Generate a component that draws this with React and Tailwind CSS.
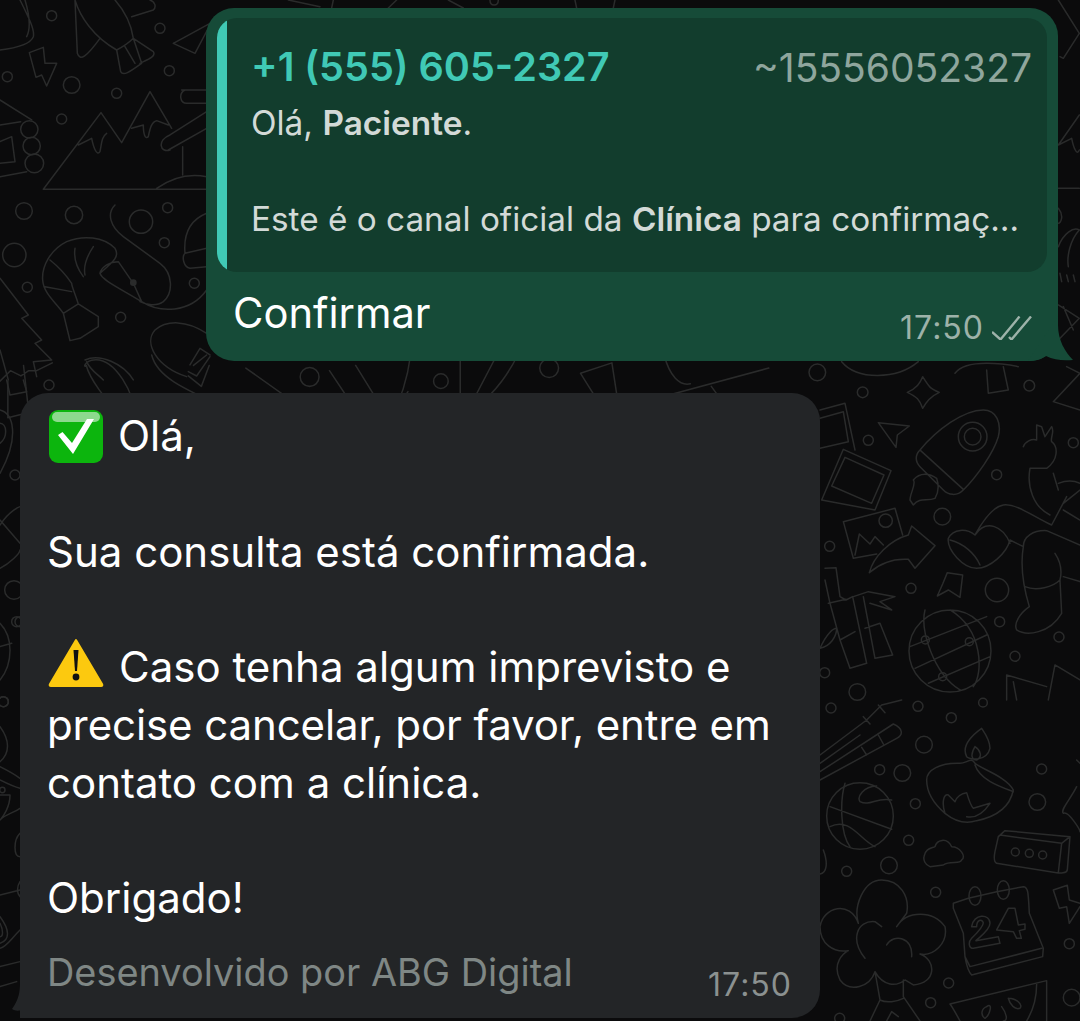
import React from "react";

// doodle wallpaper, coordinates copied off 3x crops so each group is scaled back down
function Doodles() {
  const topLeft = [[155,47,15],[480,85,15],[22,230,15],[215,255,25],[350,280,15],[185,357,15],[508,212,15],[72,633,25],[222,645,26],[423,665,35],[503,623,15],[493,728,15],[43,765,35],[82,862,15],[362,952,15],[583,850,15],[88,388,26],[95,438,26],[103,490,28]];
  const midRight = [[145,121,15],[530,224,15],[367,350,25],[29,439,15],[273,565,15],[531,570,35],[539,665,15],[717,711,15],[585,769,15],[14,818,15],[112,876,25],[760,128,15],[197,362,20]];
  const lowRight = [[33,24,15],[294,19,15],[394,53,15],[489,8,13],[312,134,25],[179,209,15],[247,219,25],[286,311,15],[665,207,15],[652,306,25],[266,421,15],[207,496,25],[80,514,15],[347,577,15],[748,731,15],[386,849,15],[332,908,15],[755,893,25],[59,955,15]];
  const leftEdge = [[60,65,15],[10,305,15],[7,570,8]];
  const leftTop = [[45,285,15],[42,630,28],[50,725,15],[10,965,15],[147,15,15]];
  return (
    <svg className="absolute inset-0 w-[1080px] h-[1021px]" viewBox="0 0 1080 1021" fill="none" stroke="#2a2b2b" strokeWidth="1.5" strokeLinecap="round" strokeLinejoin="round">
      <g transform="scale(0.3333)" strokeWidth="4.5">
        {topLeft.map(([x, y, r], i) => <circle key={i} cx={x} cy={y} r={r} />)}
        <path d="M130 568 L303 338 L365 428 L450 275 L515 385 M130 568 H620 M235 435 L275 415 C280 440 290 470 300 455 C305 430 305 410 320 400 M395 385 L430 375 C430 400 435 420 445 410 C450 385 455 365 470 362 L505 375 M545 270 H620 M555 270 C535 280 540 310 560 310 L620 310 M510 405 L620 335 M505 450 L620 385 M510 405 C470 420 480 460 510 450 M548 440 V525 M470 565 C520 530 570 520 620 530 M0 300 L95 360 M0 375 L62 365 M0 425 L35 410 L45 485 L0 490 M0 530 L80 515 M88 158 L130 142 L135 190 L170 190 L140 258 L125 225 L108 232 Z M60 0 C85 50 105 90 100 110 C90 135 40 145 0 150 M75 0 C90 50 90 90 80 110 M225 0 L232 160 C240 185 260 170 300 115 M345 0 C380 40 395 80 400 115 C385 130 370 140 350 150 C280 110 240 50 225 0 M400 115 L460 155 C470 170 440 180 420 190 M350 150 L362 215 C370 230 390 215 425 190 L400 115 M375 140 L405 190 M395 50 L460 30 C470 20 465 5 450 0 M520 130 L585 160 L630 75 M520 130 L630 70" />
        <path d="M300 820 C340 785 360 770 345 745 C310 710 250 705 200 725 C150 750 125 800 128 840 C130 880 170 910 190 940 L210 1022 L240 1015 L295 980 L295 950 L235 912 C225 880 215 860 215 850 M300 820 C305 840 360 865 425 905 L400 850 L355 785 C330 785 305 800 300 820 M135 860 L215 875 M190 940 L235 912 M150 780 C175 800 195 820 215 850 M225 745 C220 780 235 810 250 830 M280 740 C260 770 250 800 255 825 M345 615 C320 640 330 680 370 710 L480 790 C520 820 520 880 490 905 C470 920 440 915 420 905 M425 905 C480 940 570 940 620 870 M620 640 C570 660 550 700 555 760 C545 770 550 800 570 805 L620 800 M555 760 L620 745 M620 1000 C560 960 500 960 465 990 C430 1030 470 1100 560 1130 M570 1095 L600 1045 L630 1065 M565 1115 L590 1128 L630 1070 M0 835 L85 945 L65 955 L125 1020 L105 1030 L155 1080 L100 1085 L110 1130 M0 1050 L25 1140 M255 1080 C300 1060 370 1090 400 1140 M260 1085 C270 1110 290 1120 310 1140" />
        <circle cx="400" cy="848" r="10" fill="#2a2b2b" strokeWidth="0" />
      </g>
      <g transform="translate(200 0) scale(0.3333)" strokeWidth="4.5">
        <path d="M265 0 L360 20 M400 0 L395 24 M565 24 L590 0 M745 0 L790 24 M870 0 C870 20 895 20 895 0 M1125 0 L1130 24 M1245 0 L1240 24" />
      </g>
      <g transform="translate(1040 0) scale(0.3333)" strokeWidth="4.5">
        <path d="M55 0 L118 100 L70 175 L60 170 M55 435 L118 345 M55 435 L95 415 C100 440 110 470 118 450 M55 565 H118 M55 625 C75 650 60 670 55 670 M55 740 C70 700 100 680 118 690 C90 720 80 770 85 800 M60 820 L65 845 M80 825 L85 845 M100 825 L105 845 M55 915 L118 955 L55 1020 M70 920 L100 990" />
      </g>
      <g transform="translate(0 355) scale(0.523)" strokeWidth="2.9">
        <circle cx="592" cy="42" r="18" />
        <circle cx="843" cy="50" r="14" />
        <circle cx="93" cy="90" r="14" />
        <circle cx="1050" cy="25" r="18" />
        <circle cx="525" cy="110" r="16" />
        <circle cx="1023" cy="105" r="12" />
        <path d="M175 10 C220 0 260 80 260 120 M165 20 C170 40 200 90 240 120 M175 10 C160 15 160 25 165 20 M0 50 L20 30 L40 40 L55 30 L70 30 L100 15 M15 50 L15 120 L55 110 L45 20 M290 0 C300 40 340 60 450 110 M470 25 L590 110 M630 30 L690 120 M680 20 L745 125 L780 70 M785 0 C780 40 770 80 745 125 M880 10 L880 115 M990 0 C960 60 920 100 880 115 M950 0 L890 115 M1110 35 L1160 115 M1110 35 L1170 15 L1180 80 C1185 100 1200 100 1210 95 L1470 25 M1270 0 C1280 40 1300 60 1320 55 M1360 60 L1400 115 M1440 110 L1495 100 V125 M370 20 L395 0 M360 40 L385 60 L400 20" />
      </g>
      <g transform="translate(0 380) scale(0.3333)" strokeWidth="4.5">
        {leftTop.map(([x, y, r], i) => <circle key={i} cx={x} cy={y} r={r} />)}
        <path d="M0 90 C40 100 60 170 0 280 M0 130 C20 130 25 170 0 190 M0 435 C30 390 60 380 60 380 M0 420 L60 490 M0 565 C30 550 60 520 60 510 M0 730 C40 770 40 850 0 900 M0 800 L35 790 M20 0 L30 45 L80 35 L70 0" />
      </g>
      <g transform="translate(0 600) scale(0.3333)" strokeWidth="4.5">
        {leftEdge.map(([x, y, r], i) => <circle key={i} cx={x} cy={y} r={r} />)}
        <path d="M0 380 C30 420 30 460 0 485 M0 500 C20 510 40 520 60 535 M0 540 C20 550 40 560 60 565 M0 585 H30 C30 620 10 650 0 660 M0 660 C20 640 40 640 60 625 M60 700 C40 720 40 770 60 770 M0 885 L60 870 M60 845 C50 860 50 880 60 890 M0 950 C30 990 30 1020 0 1030 M0 970 C10 990 10 1010 0 1010 M60 990 C30 1020 20 1040 0 1045 M0 1100 L60 1085 M0 1160 L50 1145" />
      </g>
      <g transform="translate(820 400) scale(0.3333)" strokeWidth="4.5">
        {midRight.map(([x, y, r], i) => <circle key={i} cx={x} cy={y} r={r} />)}
        <circle cx="458" cy="110" r="43" />
        <circle cx="458" cy="110" r="25" />
        <path d="M0 30 L75 10 L105 150 M0 55 L70 35 L85 125 L0 145 M70 148 L213 212 L165 330 L5 300 Z M75 172 L192 225 L155 310 L35 258 Z M70 365 L225 325 L248 405 M70 365 L100 475 L170 462 M105 465 L118 402 L150 432 L165 410 L190 435 M175 68 L268 78 L232 105 L228 142 Z M300 150 C350 90 430 30 490 30 C530 30 545 70 535 110 C520 160 470 230 430 270 C410 290 385 285 370 270 L300 200 C285 185 285 165 300 150 Z M302 152 L430 268 M350 235 C330 220 300 215 280 240 C290 250 270 280 270 300 L280 315 C300 290 320 305 345 295 C360 270 355 250 350 235 M148 518 C160 470 210 420 265 405 L275 378 L345 437 L285 505 L265 478 C220 475 180 490 148 518 Z M610 140 C615 125 635 115 650 120 L650 75 L665 80 L675 110 L695 80 C705 95 690 115 695 125 C715 140 715 180 680 205 L630 205 C620 260 640 320 690 345 M700 220 L715 270 M715 250 C740 240 760 240 780 250 M695 375 L740 290 M730 310 L780 270 M730 330 L780 360 M695 375 C640 350 590 310 550 315 C520 320 490 360 465 405 C440 385 400 385 385 415 C380 450 430 505 470 505 C510 505 560 460 570 420 L610 440 M390 420 C430 430 465 460 480 495 M465 405 C500 355 550 380 570 430 M610 440 C600 500 610 560 628 620 C600 640 580 670 590 690 C620 710 690 700 725 640 L720 540 M615 560 C650 575 700 560 720 540 M705 460 C725 490 725 520 720 540 M610 440 C610 410 640 390 680 392 L780 435 M730 530 L780 545 M382 518 L428 525 L420 592 L385 570 L352 588 L368 552 Z M15 505 L48 503 L60 590 L78 600 L98 590 L140 790 L90 805 L60 720 L30 610 L15 540 M25 610 L78 598 M60 720 L105 695 M100 590 L145 575 L225 590 L180 605 L215 630 L150 610 M130 590 L165 775 L218 765 L180 670 L135 685 M0 745 C20 700 40 685 50 685 C50 710 30 740 0 745 M390 630 A123 123 0 1 0 390 876 A123 123 0 1 0 390 630 Z M270 740 L500 650 M285 805 L500 705 M325 850 L510 770 M315 630 C300 690 340 820 420 870 M390 630 C490 690 490 820 460 860 M560 825 L560 900 M560 825 L680 860 M705 795 L780 840 M705 795 L685 900 M580 845 L590 900" />
        <circle cx="316" cy="720" r="12" />
        <circle cx="448" cy="725" r="12" />
        <circle cx="368" cy="830" r="12" />
      </g>
      <g transform="translate(820 700) scale(0.3333)" strokeWidth="4.5">
        {lowRight.map(([x, y, r], i) => <circle key={i} cx={x} cy={y} r={r} />)}
        <circle cx="120" cy="348" r="100" />
        <circle cx="586" cy="456" r="12" />
        <circle cx="628" cy="460" r="12" />
        <circle cx="668" cy="465" r="12" />
        <ellipse cx="465" cy="588" rx="18" ry="28" />
        <ellipse cx="550" cy="570" rx="18" ry="28" />
        <path d="M0 165 L140 60 L185 15 L245 0 M0 190 L120 105 M0 215 L220 72 C250 85 250 105 230 115 L0 240 M130 50 L150 72 M175 15 L195 38 M125 142 L140 165 M175 105 L190 132 M30 320 L215 388 M75 250 C60 300 60 400 90 440 M170 258 C130 260 110 290 120 305 C150 320 170 290 215 300 M30 380 C90 350 120 420 165 440 M485 85 C450 110 425 140 440 170 C450 180 500 185 510 145 C510 120 495 100 485 85 Z M465 140 C450 165 455 180 470 180 C490 170 480 150 465 140 M320 240 C320 210 360 188 420 190 C440 190 455 170 465 190 C480 205 560 230 580 270 C570 320 530 350 470 362 C430 375 400 360 375 340 C340 310 320 280 320 240 M465 195 C480 240 540 260 580 275 M375 340 C365 310 370 280 385 285 L405 305 C410 290 425 280 440 278 C445 295 455 320 460 325 L510 310 C490 340 465 355 440 350 M312 470 C315 445 335 445 345 440 C350 420 380 410 395 440 C420 440 440 470 425 480 C420 495 390 480 370 495 L330 500 C315 495 310 480 312 470 Z M555 392 L750 410 L742 510 C740 520 720 520 710 518 L530 490 C520 485 522 470 525 455 L535 410 Z M540 405 L725 430 L715 518 M725 430 L750 410 M700 570 L742 556 L748 600 L780 610 M700 570 L718 625 L740 620 L748 670 L780 620 M400 610 L445 595 L530 575 L610 560 C625 560 625 580 628 640 L670 745 L668 770 L455 825 C445 815 440 800 435 770 L430 700 L400 625 Z M435 770 L450 800 L665 745 M455 680 C460 640 510 640 510 670 C510 690 480 710 468 722 L535 710 L540 730 L460 745 C445 745 445 725 455 715 C470 700 490 680 490 668 C485 655 470 660 470 680 Z M530 690 L565 625 L585 625 L595 675 L615 672 L615 688 L598 692 L604 715 L590 715 L580 695 Z M115 670 C100 620 130 540 185 540 C240 540 270 590 260 640 L230 680 C260 630 340 630 375 680 C385 730 340 770 300 762 C350 780 350 850 280 855 L255 840 C230 860 190 860 165 815 C150 860 90 880 60 840 C35 790 70 760 85 752 C40 760 0 730 0 680 C10 620 90 600 115 670 M135 775 C90 720 110 660 165 665 L185 680 M200 735 C220 700 280 710 275 770 M165 815 L180 900 L150 963 M250 840 L250 890 L300 963 M180 900 C200 910 230 905 250 895 M200 963 L215 935 L235 950 M390 912 L680 842 L680 963 M650 852 C650 890 640 930 620 963 M420 963 C410 945 400 925 390 912 M500 920 C520 905 510 945 495 955 C480 945 485 925 500 920 M565 895 C590 895 610 915 600 925 C585 930 570 915 565 895 M545 920 C560 940 565 963 550 963 M770 260 C750 300 720 330 730 340 C745 330 780 390 780 395 M770 180 L780 190 M10 450 C25 490 20 520 0 522" />
      </g>
      <g transform="translate(780 260) scale(0.3333)" strokeWidth="4.5">
        <circle cx="112" cy="337" r="25" />
        <circle cx="248" cy="397" r="16" />
        <circle cx="748" cy="377" r="16" />
        <path d="M185 305 C230 360 350 360 415 305 M428 350 C450 385 450 385 478 397 C450 410 440 425 428 445 C420 420 410 410 382 397 C410 385 420 370 428 350 Z M525 340 C540 320 570 310 620 310 C660 310 690 315 715 320 M620 330 L625 400 L685 390 L670 320 M860 320 L900 340 L820 425 L900 450" />
      </g>
    </svg>
  );
}

function CheckEmoji() {
  return (
    <svg className="inline-block w-[54px] h-[53px] ml-[2px] mr-[15px] align-[-12px]" viewBox="0 0 54 53">
      <rect width="54" height="53" rx="9" fill="#0cb50d" />
      <rect x="3" y="2" width="48" height="10" rx="5" fill="#8dd98d" />
      <path d="M9 25 L13.5 22 L23 33 L38 9 L45 9 L24 44 Z" fill="#fff" />
    </svg>
  );
}

function WarnEmoji() {
  return (
    <svg className="inline-block w-[56px] h-[50px] ml-[1px] mr-[15px] align-[-6px]" viewBox="0 0 56 50">
      <path d="M28 2 L54 46 Q55 48 53 48 L3 48 Q1 48 2 46 Z" fill="#fcc90f" stroke="#fcc90f" strokeWidth="2" strokeLinejoin="round" />
      <path d="M25.5 12 H30.5 L29 33 H27 Z" fill="#111" />
      <circle cx="28" cy="39" r="3.4" fill="#111" />
    </svg>
  );
}

export default function App() {
  return (
    <div className="relative w-[1080px] h-[1021px] overflow-hidden bg-[#0b0b0c] font-['Inter','Noto_Sans',sans-serif]">
      <Doodles />
      <div className="relative pt-2 flex flex-col">
        <div className="relative ml-[206px] w-[852px] h-[353px] rounded-[28px] bg-[#164b38] px-[11px] pt-[10px]">
          <div className="flex h-[254px] overflow-hidden rounded-[20px] bg-[#123d2d]">
            <div className="w-[10px] bg-[#40c9b5]" />
            <div className="flex-1 pl-[24px] pr-[15px] pt-[26px] text-[#d3dad7]">
              <div className="mb-[7px] flex h-[48px] items-center justify-between">
                <span className="text-[39.6px] font-semibold text-[#40c9b5]">+1 (555) 605-2327</span>
                <span className="text-[39px] text-[#8fa69d]">~15556052327</span>
              </div>
              <div className="text-[33.4px] leading-[48px]">Olá, <b className="font-semibold">Paciente</b>.</div>
              <div className="h-[48px]" />
              <div className="text-[33.3px] leading-[48px] whitespace-nowrap">Este é o canal oficial da <b className="font-semibold">Clínica</b> para confirmaç…</div>
            </div>
          </div>
          <div className="flex items-start justify-between pl-[16px] pr-[15px] pt-[16px]">
            <span className="text-[41.7px] leading-[50px] text-white">Confirmar</span>
            <span className="flex items-center gap-2 pt-[22px] text-[32px] leading-[36px] tracking-[1px] text-[#9db2a9]">
              17:50
              <svg className="w-[40px] h-[24px]" viewBox="993 316 40 24" fill="none" stroke="#9db2a9" strokeWidth="2.4">
                <path d="M993 332 L1001.5 339.5 L1020.5 316.5" />
                <path d="M1010 337 L1012.5 339.5 L1032 316.5" />
              </svg>
            </span>
          </div>
          <svg className="absolute -right-[16px] bottom-0 w-[46px] h-[45px]" viewBox="1028 316 46 45">
            <path d="M1058 316 V325 C1058 340 1065 352 1073 360 C1063 361 1054 360 1046 356 C1042 359 1036 361 1028 361 Z" fill="#164b38" />
          </svg>
        </div>

        <div className="relative mt-[32px] ml-[20px] w-[800px] h-[625px] rounded-[28px] bg-[#232527] pl-[27px] pr-[28px] pt-[14px] text-[42px] leading-[57.8px] text-white">
          <div><CheckEmoji />Olá,</div>
          <div className="h-[57.8px]" />
          <div>Sua consulta está confirmada.</div>
          <div className="h-[57.8px]" />
          <div><WarnEmoji />Caso tenha algum imprevisto e</div>
          <div className="tracking-[-0.1px]">precise cancelar, por favor, entre em</div>
          <div>contato com a clínica.</div>
          <div className="h-[57.8px]" />
          <div>Obrigado!</div>
          <div className="mt-[17px] flex items-start justify-between text-[#7f8785]">
            <span className="text-[37.9px]">Desenvolvido por ABG Digital</span>
            <span className="pt-[21px] text-[32px] leading-[40px] tracking-[1px] text-[#8b9190]">17:50</span>
          </div>
          <svg className="absolute -left-[8px] bottom-0 w-[36px] h-[36px]" viewBox="0 0 36 36">
            <path d="M8 0 C8 10 7 17 0 27 C4 30 9 28 12 28 C18 33 26 36 36 36 H8 Z M8 0 H36 V36 H8 Z" fill="#232527" />
          </svg>
        </div>
      </div>
    </div>
  );
}
